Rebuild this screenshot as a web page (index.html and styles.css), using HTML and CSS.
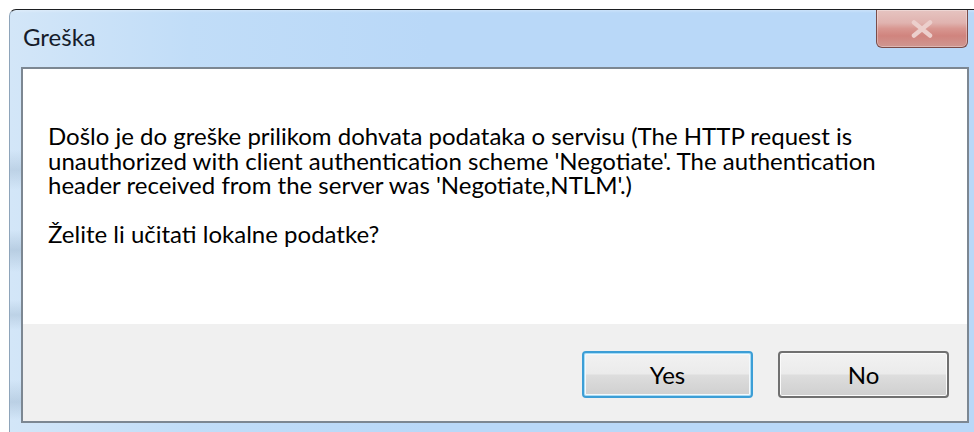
FILE: index.html
```html
<!DOCTYPE html>
<html lang="hr">
<head>
<meta charset="utf-8">
<title>Greška</title>
<link rel="stylesheet" href="styles.css">
</head>
<body>
  <div class="window">
    <div class="titlebar">
      <span class="title">Greška</span>
      <button class="close" aria-label="Close">
        <svg width="26" height="18" viewBox="0 0 26 18">
          <path d="M5 2.5 L21 15.5 M21 2.5 L5 15.5" stroke="#eccfcc" stroke-width="4.5" stroke-linecap="round"/>
        </svg>
      </button>
    </div>
    <div class="panel">
      <div class="message">
        <p>Došlo je do greške prilikom dohvata podataka o servisu (The HTTP request is<br>unauthorized with client authentication scheme 'Negotiate'. The authentication<br>header received from the server was 'Negotiate,NTLM'.)</p>
        <p>Želite li učitati lokalne podatke?</p>
      </div>
      <div class="footer">
        <button class="btn btn-default">Yes</button>
        <button class="btn">No</button>
      </div>
    </div>
  </div>
</body>
</html>
```
FILE: styles.css
```css
html, body {
  margin: 0;
  padding: 0;
  background: #ffffff;
  width: 974px;
  height: 432px;
  overflow: hidden;
}

body {
  font-family: Lato, "Noto Sans", sans-serif;
  color: #000;
}

.window {
  margin: 9px 0 0 9px;
  height: 423px;
  box-sizing: border-box;
  border-top: 1px solid #1d1f22;
  border-left: 1px solid #8ea4ba;
  border-top-left-radius: 7px;
  background:
    linear-gradient(180deg, rgba(255,255,255,0.25) 0, rgba(255,255,255,0) 3px),
    linear-gradient(180deg,
      transparent 140px, rgba(90,120,150,0.18) 160px, transparent 180px,
      transparent 220px, rgba(90,120,150,0.22) 240px, transparent 262px,
      transparent 290px, rgba(90,120,150,0.18) 305px, transparent 320px,
      transparent 370px, rgba(90,120,150,0.2) 392px, transparent 410px) 0 0 / 11px 100% no-repeat,
    linear-gradient(90deg, #d3e6f8 0, #c1ddf8 180px, #b9d8f8 420px, #b9d8f8 100%);
  padding: 0 5px 9px 11px;
  display: flex;
  flex-direction: column;
}

.titlebar {
  height: 57px;
  display: flex;
  justify-content: space-between;
  align-items: flex-start;
}

.title {
  margin-top: 13px;
  margin-left: 2px;
  font-size: 24px;
  line-height: 28px;
  color: #161c2a;
}

.close {
  width: 92px;
  height: 38px;
  margin-right: 1px;
  padding: 0;
  border: 1px solid #7a4c49;
  border-top: none;
  border-radius: 0 0 6px 6px;
  background: linear-gradient(180deg, #e6c4c1 0, #e0b3af 35%, #d89791 50%, #d0847e 70%, #cf9791 100%);
  box-shadow: inset 0 0 0 1px rgba(255,255,255,0.3);
  display: flex;
  align-items: center;
  justify-content: center;
}

.close svg {
  margin-top: 1px;
}

.panel {
  flex: 1;
  border: 2px solid #7c8792;
  display: flex;
  flex-direction: column;
  background: #fff;
}

.message {
  height: 255px;
  box-sizing: border-box;
  padding: 55px 0 0 25px;
  background: #ffffff;
  font-size: 24px;
  line-height: 24.5px;
}

.message p {
  margin: 0 0 24.5px 0;
}

.footer {
  flex: 1;
  background: #f0f0f0;
  display: flex;
  justify-content: flex-end;
  align-items: flex-start;
  gap: 25px;
  padding: 27px 18px 0 0;
}

.btn {
  width: 171px;
  height: 47px;
  border: 2px solid #707070;
  border-radius: 4px;
  background: linear-gradient(180deg, #f2f2f2 0, #ebebeb 48%, #dddddd 52%, #cfcfcf 100%);
  box-shadow: inset 0 0 0 1px #fbfbfb;
  font-family: Lato, "Noto Sans", sans-serif;
  font-size: 24px;
  color: #000;
  padding: 0;
}

.btn-default {
  border-color: #3c9ed6;
  box-shadow: inset 0 0 0 1px #a8dcf5, inset 0 0 0 2px #f4f9fc;
}
```
